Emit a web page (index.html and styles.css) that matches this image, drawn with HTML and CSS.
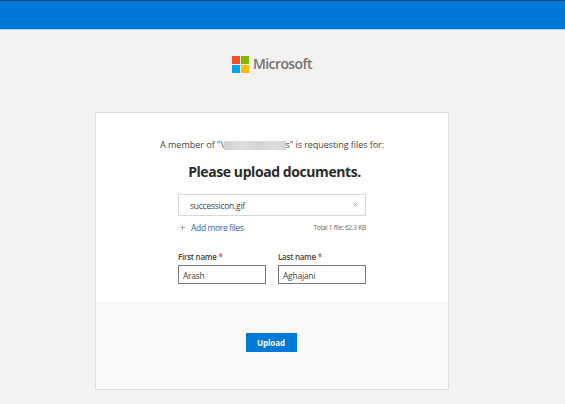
FILE: index.html
```html
<!DOCTYPE html>
<html lang="en">
<head>
<meta charset="utf-8">
<title>Microsoft file request</title>
<link rel="stylesheet" href="styles.css">
</head>
<body>
<header class="topbar"></header>
<main class="page">
  <div class="brand">
    <svg class="brand-mark" viewBox="0 0 17 17" aria-hidden="true">
      <rect width="8" height="8" fill="#f25022"/>
      <rect x="9" width="8" height="8" fill="#7fba00"/>
      <rect y="9" width="8" height="8" fill="#00a4ef"/>
      <rect x="9" y="9" width="8" height="8" fill="#ffb900"/>
    </svg>
    <span class="brand-name">Microsoft</span>
  </div>
  <form class="card">
    <section class="card-body">
      <p class="request"><span class="lead">A member of "\</span><span class="redacted"></span><span class="tail">s" is requesting files for:</span></p>
      <h1 class="title">Please upload documents.</h1>
      <div class="file"><span class="file-name">successicon.gif</span>
        <svg class="remove" viewBox="0 0 5 5" aria-hidden="true"><path d="M.5 .5l4 4M4.500 .5l-4 4"/></svg>
      </div>
      <div class="file-actions">
        <svg class="plus" viewBox="0 0 5 5" aria-hidden="true"><path d="M2.500 0v5M0 2.500h5"/></svg>
        <a class="add">Add more files</a>
        <span class="total">Total 1 file: 62.3 KB</span>
      </div>
      <div class="names">
        <div class="field"><div class="label">First name <span class="star">*</span></div><div class="input">Arash</div></div>
        <div class="field"><div class="label">Last name <span class="star">*</span></div><div class="input">Aghajani</div></div>
      </div>
    </section>
    <footer class="card-footer"><div class="upload">Upload</div></footer>
  </form>
</main>
</body>
</html>
```
FILE: styles.css
```css
* { box-sizing: border-box; }
body { margin: 0; height: 404px; overflow: hidden; background: #f3f2f1; color: #444; font-family: "Open Sans", "Noto Sans", sans-serif; font-size: 8px; }
.topbar { height: 30px; background: #0078d7; border-top: 1px solid #154a77; border-bottom: 1px solid #b5d5ee; }
.page { display: flex; flex-direction: column; padding-left: 95px; }
.brand { display: flex; align-items: center; height: 20px; margin: 24px 0 38px 137px; }
.brand-mark { width: 17px; height: 17px; }
.brand-name { margin-left: 4px; color: #737373; font-size: 14px; font-weight: 600; line-height: 20px; letter-spacing: -.6px; }
.card { width: 354px; height: 278px; border: 1px solid #dfdfdf; background: #fff; }
.card-body { height: 188px; padding: 24px 82px 0; }
.request { display: flex; align-items: center; height: 16px; margin: 0 -18px; font-size: 9px; line-height: 16px; white-space: nowrap; }
.redacted { position: relative; width: 63px; height: 9px; background: linear-gradient(90deg, #d0d0d0, #dedede 28%, #d4d4d4 55%, #dddde1 80%, #d3d1d3); }
.tail { margin-left: -1px; letter-spacing: -.06px; }
.title { height: 20px; margin: 9px -8px 0 -3px; padding-left: 0; color: #2b2b2b; text-align: center; font-size: 14px; font-weight: 700; line-height: 20px; letter-spacing: -.42px; white-space: nowrap; }
.file { display: flex; align-items: center; justify-content: space-between; height: 22px; margin-top: 12px; padding: 0 7px 0 11px; border: 1px solid #d8d8d8; }
.file-name { font-size: 8.5px; line-height: 12px; padding-top: 1px; letter-spacing: -.25px; }
.remove { width: 5px; height: 5px; margin-bottom: 1px; stroke: #7199b5; stroke-width: .7; fill: none; }
.file-actions { display: flex; align-items: center; height: 14px; margin: 4px 0 0 2px; }
.plus { width: 5px; height: 5px; stroke: #899bac; stroke-width: .8; }
.add { margin-left: 6px; color: #246cae; font-size: 8.5px; letter-spacing: -.35px; }
.total { margin-left: auto; color: #666; font-size: 6.5px; letter-spacing: -.23px; white-space: nowrap; }
.names { display: flex; gap: 12px; margin-top: 16px; }
.field { width: 88px; }
.label { height: 15px; line-height: 14px; font-weight: 600; letter-spacing: -.25px; white-space: nowrap; }
.star { color: #a4535c; font-weight: 600; }
.input { height: 19px; padding-left: 4px; border: 1px solid #777; line-height: 19px; font-size: 8.5px; letter-spacing: -.25px; }
.card-footer { display: flex; justify-content: center; height: 88px; padding: 32px 2px 0 0; background: #faf9f8; }
.upload { width: 51px; height: 19px; background: #0078d7; color: #fff; text-align: center; line-height: 19px; font-weight: 700; letter-spacing: -.1px; }
```
